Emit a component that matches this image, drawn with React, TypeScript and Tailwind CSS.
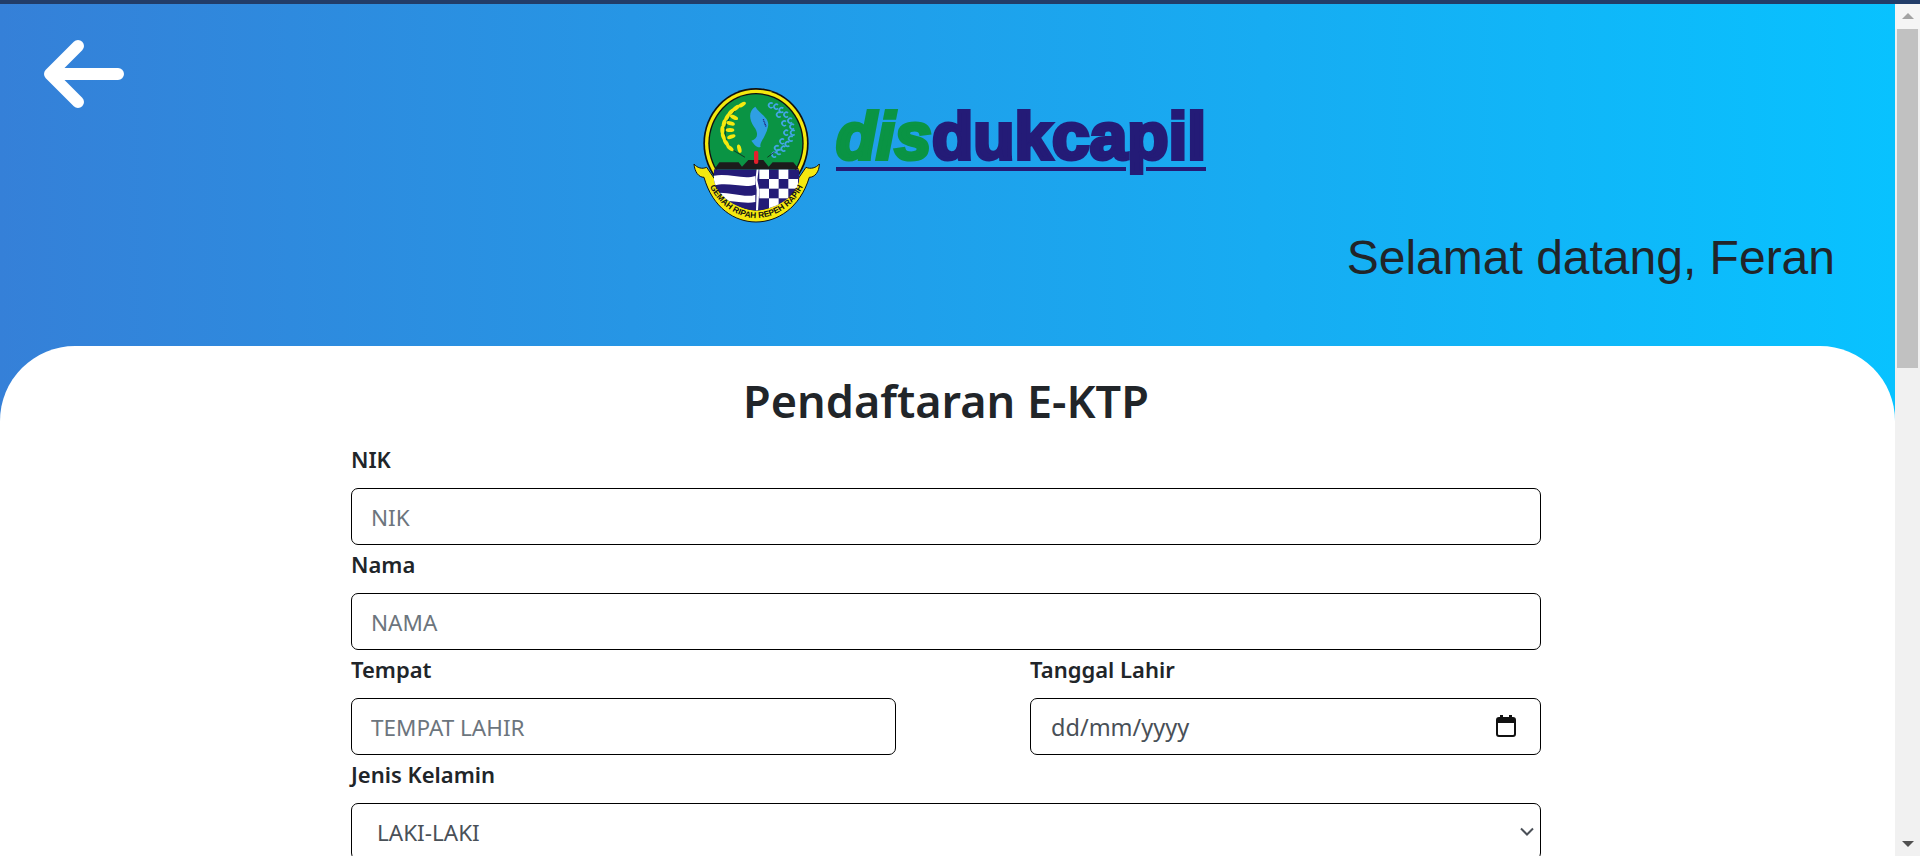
const PADDY = [
  [186, 74, -30], [168, 84, -35], [153, 96, -45], [141, 112, -60], [132, 130, -75], [127, 150, -90],
  [130, 170, 70], [138, 188, 55], [150, 204, 40], [178, 206, 75], [162, 112, 25], [152, 130, 15], [150, 150, 0], [154, 170, -20],
];
const COTTON = [
  [272, 76], [288, 80], [304, 90], [318, 104], [330, 122], [336, 140], [338, 158], [332, 176], [322, 192], [310, 206], [296, 216], [282, 224],
  [296, 104], [312, 130], [318, 158], [306, 184], [290, 204],
];
const CHECKS = [
  [238, 268], [296, 268], [267, 297], [325, 297], [238, 326], [296, 326], [267, 355], [325, 355],
];

function Logo() {
  return (
    <svg width="540" height="150" viewBox="0 0 540 150" className="shrink-0">
      <defs>
        <clipPath id="shield">
          <path d="M102 268 L358 268 L358 300 C350 345 300 385 228 392 C160 385 110 345 102 300 Z" />
        </clipPath>
      </defs>
      <g transform="scale(0.3333)">
        <ellipse cx="228" cy="190" rx="158" ry="166" fill="#111" />
        <ellipse cx="228" cy="190" rx="153" ry="161" fill="#f5e90f" />
        <ellipse cx="228" cy="190" rx="143" ry="151" fill="#111" />
        <ellipse cx="228" cy="190" rx="139" ry="147" fill="#0a9444" />
        <path d="M42 252 C52 264 66 268 80 262 L106 300 C136 362 186 390 228 390 C272 390 322 362 352 300 L378 262 C392 268 408 264 418 252 C418 276 404 292 388 292 C360 384 292 426 228 426 C164 426 98 384 72 292 C56 292 44 276 42 252 Z" fill="#f5e90f" stroke="#111" strokeWidth="3" />
        <path d="M103 268 L118 247 L176 247 L186 260 L205 240 L250 240 L266 260 L278 247 L340 247 L357 268 Z" fill="#1c1c1c" />
        <g clipPath="url(#shield)">
          <rect x="100" y="266" width="260" height="130" fill="#241b77" />
          <path d="M100 288 C140 278 190 300 226 288 L226 314 C190 326 140 304 100 318 Z" fill="#fff" />
          <path d="M100 340 C140 332 195 356 226 344 L226 366 C190 374 140 356 100 362 Z" fill="#fff" />
          <path d="M230 268 L236 268 L232 300 L238 330 L234 392 L228 392 L230 330 L226 300 Z" fill="#fff" />
          {CHECKS.map(([x, y]) => (
            <rect key={`${x}-${y}`} x={x} y={y} width="29" height="29" fill="#fff" />
          ))}
        </g>
        <rect x="222" y="212" width="13" height="40" rx="6" fill="#e3202c" />
        <path d="M226 80 C206 92 206 118 222 140 C238 162 232 176 214 182 C224 196 234 206 242 200 C236 190 258 170 264 140 C270 112 240 104 226 80 Z" fill="#2f9fe3" />
        <path d="M250 118 L258 140" stroke="#241b77" strokeWidth="4" strokeDasharray="3 2" />
        <path d="M186 76 C140 106 120 160 150 205 L195 232" fill="none" stroke="#111" strokeWidth="2" />
        {PADDY.map(([x, y, r]) => (
          <ellipse key={`${x}-${y}`} cx={x} cy={y} rx="13" ry="6" transform={`rotate(${r} ${x} ${y})`} fill="#f5e90f" />
        ))}
        {COTTON.map(([x, y]) => (
          <path key={`${x}-${y}`} d={`M${x + 6} ${y - 5} A7 7 0 1 0 ${x + 6} ${y + 5}`} fill="none" stroke="#43a6e6" strokeWidth="5" />
        ))}
        <path d="M262 232 L284 216" stroke="#111" strokeWidth="2" />
        <path id="motto" d="M78 296 C108 372 170 414 228 414 C290 414 352 372 380 296" fill="none" />
        <text fontFamily="'Liberation Sans', sans-serif" fontSize="25" fontWeight="700" fill="#111">
          <textPath href="#motto" startOffset="50%" textAnchor="middle">GEMAH RIPAH REPEH RAPIH</textPath>
        </text>
      </g>
      <text x="156" y="79" fontFamily="'Liberation Sans', sans-serif" fontSize="66" fontWeight="700" fontStyle="italic" fill="#0a9444" stroke="#0a9444" strokeWidth="4">dis</text>
      <text x="252" y="79" fontFamily="'Liberation Sans', sans-serif" fontSize="66" fontWeight="700" fill="#241b77" stroke="#241b77" strokeWidth="4" textLength="274" lengthAdjust="spacingAndGlyphs">dukcapil</text>
      <rect x="156" y="87" width="290" height="4" fill="#241b77" />
      <rect x="466" y="87" width="60" height="4" fill="#241b77" />
    </svg>
  );
}

function Field({ label, children }: { label: string; children: React.ReactNode }) {
  return (
    <div>
      <label className="block h-[48px] pt-[4px] text-[22px] leading-[30px] font-semibold text-[#212529]">{label}</label>
      {children}
    </div>
  );
}

const inputClass =
  'block w-full h-[57px] rounded-[7px] border border-black bg-white px-[19px] pt-[2px] text-[22.5px] text-[#212529] placeholder:text-[#6c757d] outline-none';

export default function App() {
  return (
    <div className="h-[856px] overflow-hidden bg-white flex flex-col font-['Noto_Sans',sans-serif]">
      <div className="h-[4px] shrink-0 bg-[#223d69]" />
      <div className="flex flex-1 min-h-0">
        <main className="flex-1 flex flex-col bg-linear-to-r/srgb from-[#3580d8] to-[#08c2ff]">
          <header className="h-[342px] shrink-0">
            <div className="flex items-start">
              <svg width="80" height="68" viewBox="0 0 80 68" className="mt-[36px] ml-[44px]" fill="none" stroke="#fff" strokeWidth="12" strokeLinecap="round" strokeLinejoin="round">
                <path d="M6 34 H74 M34 6 L6 34 L34 62" />
              </svg>
              <div className="ml-[556px] mt-[76px]">
                <Logo />
              </div>
            </div>
            <h2 className="mt-[-1px] pr-[60px] text-right text-[48px] leading-[58px] text-[#212529] font-['Liberation_Sans',sans-serif]">
              Selamat datang, Feran
            </h2>
          </header>
          <section className="flex-1 rounded-t-[75px] bg-white">
            <div className="ml-[351px] w-[1190px] pt-[28px]">
              <h1 className="mb-[12px] text-center text-[45px] leading-[54px] font-semibold text-[#212529]">Pendaftaran E-KTP</h1>
              <Field label="NIK">
                <input className={inputClass} placeholder="NIK" />
              </Field>
              <Field label="Nama">
                <input className={inputClass} placeholder="NAMA" />
              </Field>
              <div className="grid grid-cols-[545px_511px] justify-between">
                <Field label="Tempat">
                  <input className={inputClass} placeholder="TEMPAT LAHIR" />
                </Field>
                <Field label="Tanggal Lahir">
                  <div className="flex h-[57px] items-center justify-between rounded-[7px] border border-black pl-[20px] pr-[24px] text-[23.5px] text-[#495057]">
                    <span className="mt-[3px]">dd/mm/yyyy</span>
                    <svg width="20" height="22" viewBox="0 0 20 22" fill="none" className="mt-[-2px]">
                      <path d="M1 5 a2 2 0 0 1 2 -2 H17 a2 2 0 0 1 2 2 V19 a2 2 0 0 1 -2 2 H3 a2 2 0 0 1 -2 -2 Z" stroke="#111" strokeWidth="2" />
                      <path d="M1 4 H19 V8 H1 Z M4 0 H7 V4 H4 Z M13 0 H16 V4 H13 Z" fill="#111" />
                    </svg>
                  </div>
                </Field>
              </div>
              <Field label="Jenis Kelamin">
                <div className="relative">
                  <select className="block h-[57px] w-full appearance-none rounded-[7px] border border-black bg-white px-[25px] pt-[2px] text-[22.5px] text-[#495057] outline-none">
                    <option>LAKI-LAKI</option>
                    <option>PEREMPUAN</option>
                  </select>
                  <svg width="14" height="10" viewBox="0 0 14 10" className="absolute right-[7px] top-[24px]" fill="none" stroke="#4b5058" strokeWidth="2">
                    <path d="M1 1.5 L7 7.5 L13 1.5" />
                  </svg>
                </div>
              </Field>
            </div>
          </section>
        </main>
        <aside className="w-[25px] shrink-0 bg-[#f1f1f1] flex flex-col">
          <div className="h-[25px] flex items-center justify-center bg-[#f5f5f5]">
            <div className="mt-[-2px] h-0 w-0 border-x-[6px] border-b-[6px] border-x-transparent border-b-[#a3a3a3]" />
          </div>
          <div className="mx-[2px] h-[339px] bg-[#c1c1c1]" />
          <div className="flex-1" />
          <div className="h-[25px] flex items-center justify-center">
            <div className="h-0 w-0 border-x-[6px] border-t-[6px] border-x-transparent border-t-[#505050]" />
          </div>
        </aside>
      </div>
    </div>
  );
}
